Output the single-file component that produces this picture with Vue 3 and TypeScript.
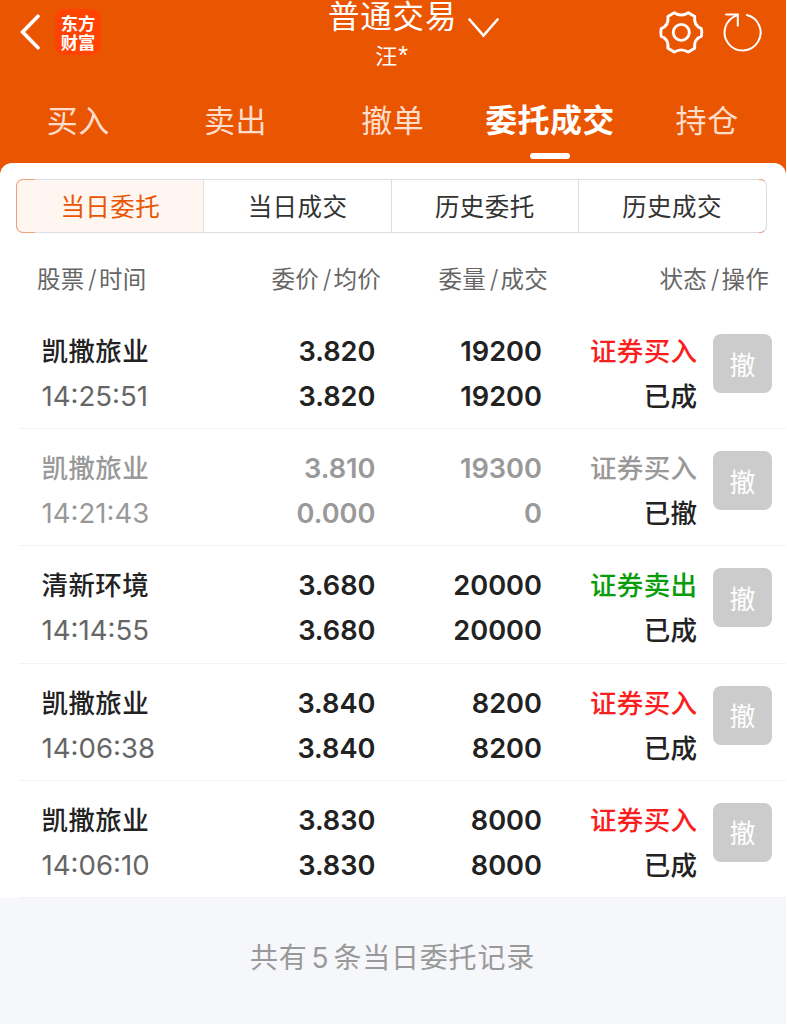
<script setup lang="ts">
interface Order {
  name: string
  time: string
  price: string
  average: string
  quantity: string
  filled: string
  side: string
  status: string
  tone: 'buy' | 'sell' | 'void'
}

const tabs: string[] = ['买入', '卖出', '撤单', '委托成交', '持仓']
const activeTab = 3
const segments: string[] = ['当日委托', '当日成交', '历史委托', '历史成交']
const columns: [string, string][] = [['股票', '时间'], ['委价', '均价'], ['委量', '成交'], ['状态', '操作']]

const orders: Order[] = [
  { name: '凯撒旅业', time: '14:25:51', price: '3.820', average: '3.820', quantity: '19200', filled: '19200', side: '证券买入', status: '已成', tone: 'buy' },
  { name: '凯撒旅业', time: '14:21:43', price: '3.810', average: '0.000', quantity: '19300', filled: '0', side: '证券买入', status: '已撤', tone: 'void' },
  { name: '清新环境', time: '14:14:55', price: '3.680', average: '3.680', quantity: '20000', filled: '20000', side: '证券卖出', status: '已成', tone: 'sell' },
  { name: '凯撒旅业', time: '14:06:38', price: '3.840', average: '3.840', quantity: '8200', filled: '8200', side: '证券买入', status: '已成', tone: 'buy' },
  { name: '凯撒旅业', time: '14:06:10', price: '3.830', average: '3.830', quantity: '8000', filled: '8000', side: '证券买入', status: '已成', tone: 'buy' },
]
</script>

<template>
  <div class="app">
    <header class="top">
      <div class="bar">
        <div class="left">
          <svg class="back" width="22" height="36" viewBox="0 0 22 36">
            <path d="M20 2.200 4.600 18 20 33.800" />
          </svg>
          <div class="logo"><span>东方</span><span>财富</span></div>
        </div>
        <div class="account">
          <div class="title">普通交易</div>
          <div class="owner">汪<i>*</i></div>
        </div>
        <svg class="chevron" width="32" height="22" viewBox="0 0 32 22">
          <path d="M2.500 2.500 16.500 18.500 30.500 2.500" />
        </svg>
        <div class="actions">
          <svg class="gear" width="46" height="46" viewBox="0 0 46 46">
            <path d="M16.300 2.700Q23.300 7.200 30.300 2.700L36.700 6.600Q35.500 15.500 43.400 18.600Q44.200 22.500 43.400 26.200Q35.500 29.500 36.700 38.200L30.300 42.100Q23.300 37.600 16.300 42.100L9.900 38.200Q11.100 29.500 3.200 26.200Q2.400 22.500 3.200 18.600Q11.100 15.500 9.900 6.600Z" />
            <circle cx="23.300" cy="22.400" r="8" />
          </svg>
          <svg class="reload" width="42" height="42" viewBox="0 0 42 42">
            <path d="M25.800 4A18 18 0 1 1 16 4.400M5 3.400H16.800V14.800" />
          </svg>
        </div>
      </div>
      <nav class="tabs">
        <div v-for="(tab, i) in tabs" :key="tab" class="tab" :class="{ active: i === activeTab }">
          <span>{{ tab }}</span>
        </div>
      </nav>
    </header>

    <main class="sheet">
      <div class="segments">
        <div v-for="(label, i) in segments" :key="label" class="segment" :class="{ selected: i === 0 }">{{ label }}</div>
      </div>
      <div class="head">
        <div v-for="column in columns" :key="column[0]">{{ column[0] }}<i>/</i>{{ column[1] }}</div>
      </div>
      <div v-for="order in orders" :key="order.time" class="row" :class="order.tone">
        <div class="cell stock"><b>{{ order.name }}</b><span>{{ order.time }}</span></div>
        <div class="cell num"><span>{{ order.price }}</span><span>{{ order.average }}</span></div>
        <div class="cell num"><span>{{ order.quantity }}</span><span>{{ order.filled }}</span></div>
        <div class="cell state"><b class="side">{{ order.side }}</b><b class="status">{{ order.status }}</b></div>
        <button class="cancel">撤</button>
      </div>
    </main>

    <footer class="summary">共有<i>5</i>条当日委托记录</footer>
  </div>
</template>

<style>
body {
  margin: 0;
  background: #fff;
}
</style>

<style scoped>
.app {
  width: 786px;
  height: 1024px;
  overflow: hidden;
  display: flex;
  flex-direction: column;
  background: #f6f7fa;
  font-family: Inter, "Noto Sans CJK SC", sans-serif;
  color: #222;
}
i { font-style: normal; }
svg { fill: none; stroke: #fff; flex: none; display: block; }
.top {
  height: 175px;
  margin-bottom: -12px;
  flex: none;
  background: #ea5502;
  color: #fff;
}
.bar {
  height: 80px;
  display: grid;
  grid-template-columns: 328px 128px 1fr auto;
  align-items: start;
}
.left { display: flex; padding: 9px 0 0 18px; }
.back { margin-top: 5px; stroke-width: 3.600px; stroke-linecap: round; }
.logo {
  width: 46px;
  height: 46px;
  margin-left: 15px;
  border-radius: 9px;
  background: #ff4302;
  display: flex;
  flex-direction: column;
  align-items: center;
  justify-content: center;
  font: 700 17.300px/19.500px "Noto Sans CJK SC", sans-serif;
}
.account { text-align: center; }
.title { font-size: 31.500px; letter-spacing: .800px; line-height: 34px; white-space: nowrap; }
.owner { font-size: 22px; line-height: 28px; margin-top: 8px; letter-spacing: 1px; }
.owner i { font-family: "Liberation Sans", sans-serif; font-size: 25px; line-height: 20px; }
.chevron { margin: 17px 0 0 11px; stroke-width: 2.600px; stroke-linecap: round; }
.actions { display: flex; padding: 10px 23px 0 0; gap: 17px; }
.gear { stroke-width: 2.900px; stroke-linejoin: round; }
.reload { stroke-width: 2px; stroke-linecap: round; margin-top: 1px; }
.tabs { display: grid; grid-template-columns: repeat(5, 1fr); }
.tab {
  height: 80px;
  text-align: center;
  font-size: 31px;
  line-height: 82px;
  letter-spacing: .600px;
  text-indent: -.500px;
  color: #ffddcb;
  white-space: nowrap;
}
.active { color: #fff; font-weight: 700; font-size: 32px; letter-spacing: .400px; }
.active::after {
  content: "";
  display: block;
  width: 40px;
  height: 6px;
  margin: -9px auto 0;
  border-radius: 3px;
  background: #fff;
}
.sheet { border-radius: 12px 12px 0 0; background: #fff; height: 735px; flex: none; overflow: hidden; }
.segments {
  height: 52px;
  margin: 16px 19px 0 16px;
  border: 1px solid #dcdee5;
  border-radius: 7px;
  display: grid;
  grid-template-columns: repeat(4, 1fr);
  position: relative;
}
/* Coloured corners over the neutral frame */
.segments::before,
.segments::after {
  content: "";
  position: absolute;
  top: -1px;
  bottom: -1px;
  width: 18px;
  border: 1px solid #efa27b;
  pointer-events: none;
}
.segments::before { left: -1px; border-right: 0; border-radius: 7px 0 0 7px; }
.segments::after { right: -1px; width: 7px; border-left: 0; border-right-color: #dcdee5; border-radius: 0 7px 7px 0; }
.segment {
  font-size: 24.500px;
  line-height: 54px;
  height: 52px;
  letter-spacing: .500px;
  text-align: center;
  text-indent: -.500px;
  color: #333;
  box-shadow: -1px 0 #dcdee5;
}
.selected { background: #fff5f1; color: #ea5504; box-shadow: none; border-radius: 6px 0 0 6px; }
.head {
  height: 79px;
  padding: 0 17px 0 37px;
  display: grid;
  grid-template-columns: 200px 144px 167px 1fr;
  line-height: 93px;
  font-size: 23.500px;
  letter-spacing: .200px;
  color: #666;
  text-align: right;
}
.head div:first-child { text-align: left; }
.head i { margin: 0 2px 0 3.700px; font-size: 25px; font-weight: 300; }
.row {
  height: 116.200px;
  margin-left: 19px;
  padding: 0 14px 0 22.500px;
  border-bottom: 1px solid #f3f3f3;
  display: grid;
  grid-template-columns: 200px 134px 166.500px 155.500px 1fr;
}
.cell { display: flex; flex-direction: column; text-align: right; padding-top: 17px; line-height: 45px; }
.cell b { font-weight: 500; font-size: 26.500px; letter-spacing: .400px; }
.stock { text-align: left; }
.stock span { font-size: 27.600px; color: #666; }
.num { font-size: 27.200px; font-weight: 600; }
.side { color: #fa1e1e; }
.sell .side { color: #0a9d0a; }
.void .stock b, .void .stock span, .void .num, .void .side { color: #999; }
.cancel {
  justify-self: end;
  width: 59px;
  height: 59px;
  margin: 22px 0 0;
  padding: 0;
  border: 0;
  border-radius: 8px;
  background: #ccc;
  color: #fff;
  font: 400 26px/58px "Noto Sans CJK SC", sans-serif;
}
.summary {
  text-align: center;
  text-indent: -1px;
  font-size: 28px;
  letter-spacing: .800px;
  line-height: 120px;
  color: #999;
}
.summary i { margin: 0 4px 0 4px; }
</style>
